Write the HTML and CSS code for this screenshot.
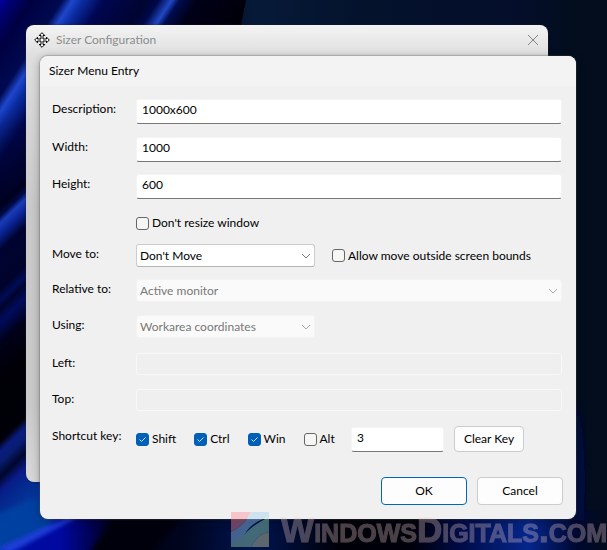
FILE: index.html
```html
<!DOCTYPE html>
<html lang="en">
<head>
<meta charset="utf-8">
<title>Sizer Menu Entry</title>
<link rel="stylesheet" href="styles.css">
</head>
<body>
<main class="desktop">
  <svg class="wallpaper" viewBox="0 0 607 550" preserveAspectRatio="none" aria-hidden="true">
    <defs>
      <linearGradient id="base" x1="0" y1="0" x2="1" y2="0">
        <stop offset="0" stop-color="#00000c"/><stop offset=".38" stop-color="#04122c"/>
        <stop offset=".42" stop-color="#061a38"/><stop offset=".6" stop-color="#04122c"/>
        <stop offset=".86" stop-color="#040e2a"/><stop offset=".94" stop-color="#020d1e"/><stop offset="1" stop-color="#020c1c"/>
      </linearGradient>
      <linearGradient id="upper" gradientUnits="userSpaceOnUse" x1="0" y1="0" x2="183" y2="119">
        <stop offset="0" stop-color="#0000a0"/><stop offset=".04" stop-color="#000074"/><stop offset=".12" stop-color="#000042"/>
        <stop offset=".24" stop-color="#000a50"/><stop offset=".28" stop-color="#1e46cc"/><stop offset=".32" stop-color="#0a2ca0"/>
        <stop offset=".4" stop-color="#000650"/><stop offset=".56" stop-color="#000430"/><stop offset=".61" stop-color="#000848"/>
        <stop offset=".66" stop-color="#2048c4"/><stop offset=".69" stop-color="#000c50"/><stop offset=".76" stop-color="#000018"/>
        <stop offset="1" stop-color="#000008"/>
      </linearGradient>
      <linearGradient id="lower" gradientUnits="userSpaceOnUse" x1="0" y1="200" x2="180" y2="387">
        <stop offset="0" stop-color="#00001c" stop-opacity="0"/><stop offset=".02" stop-color="#00001c"/>
        <stop offset=".045" stop-color="#000a48"/><stop offset=".065" stop-color="#1a3cb8"/>
        <stop offset=".1" stop-color="#08208c"/><stop offset=".14" stop-color="#000330"/><stop offset=".25" stop-color="#00042c"/>
        <stop offset=".28" stop-color="#000c58"/><stop offset=".3" stop-color="#00042c"/><stop offset=".34" stop-color="#000c5c"/>
        <stop offset=".4" stop-color="#00001a"/><stop offset=".5" stop-color="#000006"/><stop offset=".67" stop-color="#000008"/>
        <stop offset=".7" stop-color="#0a1c80"/><stop offset=".73" stop-color="#081c70"/><stop offset=".77" stop-color="#00062c"/>
        <stop offset=".81" stop-color="#0a1a88"/><stop offset=".84" stop-color="#04268c"/><stop offset="1" stop-color="#0646a8"/>
      </linearGradient>
      <linearGradient id="shade" x1="0" y1="0" x2="0" y2="1">
        <stop offset="0" stop-color="#00001c" stop-opacity="0"/><stop offset="1" stop-color="#00001c"/>
      </linearGradient>
      <linearGradient id="floor" x1="0" y1="0" x2="1" y2="0">
        <stop offset="0" stop-color="#0010a0"/><stop offset=".1" stop-color="#0008a0"/><stop offset=".17" stop-color="#000034"/>
        <stop offset=".2" stop-color="#000010"/><stop offset=".3" stop-color="#00051e"/><stop offset=".42" stop-color="#001450"/>
        <stop offset=".56" stop-color="#000008"/><stop offset=".68" stop-color="#00000c"/>
        <stop offset=".76" stop-color="#000c48"/><stop offset=".87" stop-color="#06268c"/><stop offset=".95" stop-color="#000830"/><stop offset="1" stop-color="#020a1c"/>
      </linearGradient>
      <filter id="soft" x="-20%" y="-20%" width="140%" height="140%"><feGaussianBlur stdDeviation="2"/></filter>
    </defs>
    <rect width="607" height="550" fill="url(#base)"/>
    <path d="M0 0H246L238 40H40V240H0Z" fill="url(#upper)"/>
    <path d="M0 110H40V240H0Z" fill="url(#shade)"/>
    <path d="M0 150H60V525H0Z" fill="url(#lower)"/>
    <path d="M40 510H607V550H0V525Z" fill="url(#floor)"/>
    <g filter="url(#soft)">
      <path d="M-5 515L30 500H80L45 528-5 555Z" fill="#0440a0"/>
      <path d="M-5 550L68 517H78L10 553Z" fill="#1a3cd8"/>
      <path d="M112 519H180L150 555H88Z" fill="#000010"/>
      <path d="M576 400Q588 440 584 520H574Z" fill="#000840"/>
    </g>
  </svg>

  <section class="window parent" aria-label="Sizer Configuration">
    <header class="parent-bar">
      <svg class="move-icon" viewBox="0 0 16 16" aria-hidden="true">
        <path d="M8 .7 10.8 3.5H9V7h3.5V5.2L15.3 8l-2.8 2.8V9H9v3.5h1.8L8 15.3l-2.8-2.8H7V9H3.5v1.8L.7 8l2.8-2.8V7H7V3.5H5.2Z"/>
      </svg>
      <h2 class="parent-title">Sizer Configuration</h2>
      <button class="close" type="button" aria-label="Close">
        <svg viewBox="0 0 12 12"><path d="M1 1 11 11M11 1 1 11"/></svg>
      </button>
    </header>
  </section>

  <form class="window dialog">
    <h1 class="dialog-title">Sizer Menu Entry</h1>
    <div class="fields">
      <label class="label" for="desc">Description:</label>
      <input class="text" id="desc" type="text" value="1000x600">
      <label class="label" for="width">Width:</label>
      <input class="text" id="width" type="text" value="1000">
      <label class="label" for="height">Height:</label>
      <input class="text" id="height" type="text" value="600">
      <label class="check second"><input type="checkbox">Don't resize window</label>
      <label class="label" for="move">Move to:</label>
      <div class="line">
        <span class="pick short"><select id="move"><option>Don't Move</option></select><svg viewBox="0 0 10 6" aria-hidden="true"><path d="M1 1 5 5 9 1"/></svg></span>
        <label class="check"><input type="checkbox">Allow move outside screen bounds</label>
      </div>
      <label class="label" for="relative">Relative to:</label>
      <span class="pick"><select id="relative" disabled><option>Active monitor</option></select><svg viewBox="0 0 10 6" aria-hidden="true"><path d="M1 1 5 5 9 1"/></svg></span>
      <label class="label" for="using">Using:</label>
      <span class="pick short"><select id="using" disabled><option>Workarea coordinates</option></select><svg viewBox="0 0 10 6" aria-hidden="true"><path d="M1 1 5 5 9 1"/></svg></span>
      <label class="label" for="left">Left:</label>
      <input class="text" id="left" type="text" disabled>
      <label class="label" for="top">Top:</label>
      <input class="text" id="top" type="text" disabled>
      <label class="label" for="key">Shortcut key:</label>
      <div class="line keys">
        <div class="modifiers">
          <label class="check"><input type="checkbox" checked>Shift</label>
          <label class="check"><input type="checkbox" checked>Ctrl</label>
          <label class="check"><input type="checkbox" checked>Win</label>
          <label class="check"><input type="checkbox">Alt</label>
        </div>
        <input class="text key" id="key" type="text" value="3">
        <button class="button clear" type="button">Clear Key</button>
      </div>
    </div>
    <div class="actions">
      <button class="button primary" type="submit">OK</button>
      <button class="button" type="button">Cancel</button>
    </div>
  </form>

  <div class="watermark">
    <svg class="mark" viewBox="0 0 38 35" aria-hidden="true">
      <path d="M0 0H20Q15 12 0 20Z" fill="#ff8c96"/>
      <path d="M20 0H38V5Q20 10 14 22T0 31V20Q15 12 20 0Z" fill="#a0d2f0"/>
      <path d="M38 5V20Q26 22 20 35H0V31Q8 30 14 22T38 5Z" fill="#a0e0b4"/>
      <path d="M38 20V35H20Q26 22 38 20Z" fill="#dcdca0"/>
    </svg>
    <span class="brand">WindowsDigitals.com</span>
  </div>
</main>
</body>
</html>
```
FILE: styles.css
```css
* { box-sizing: border-box; }

body {
  margin: 0;
  font: 12px/20px Lato, "Open Sans", sans-serif;
  color: #000;
}

input, select, button { font: inherit; color: inherit; }
h1, h2 { margin: 0; font-size: 12px; font-weight: 400; }

.desktop {
  position: relative;
  min-height: 100vh;
  overflow: hidden;
  background: #000a24;
}

.wallpaper {
  position: absolute;
  inset: 0;
  width: 100%;
  height: 100%;
}

.window { position: absolute; border-radius: 8px; }

.parent {
  inset: 25px 59px 68px 26px;
  background: linear-gradient(#f3f3f3, #dedede 32px, #cacaca 180px, #cacaca 380px, #d8d8d8);
  box-shadow: 0 0 2px #223;
}

.parent-bar {
  display: flex;
  align-items: center;
  gap: 6px;
  height: 30px;
  padding: 0 9px 0 8px;
}

.move-icon { width: 16px; height: 16px; fill: #fff; stroke: #000; }
.parent-title { flex: 1; color: #8c8c8c; }

.close { width: 12px; height: 12px; padding: 0; border: 0; background: none; }
.close svg { display: block; fill: none; stroke: #858585; }

.dialog {
  left: 40px;
  right: 31px;
  top: 56px;
  padding-bottom: 14px;
  background: #f0f0f0;
  box-shadow: 0 0 2px #555, 0 2px 10px rgba(0, 0, 0, .3);
}

.dialog-title {
  padding: 5px 9px;
  border-radius: 8px 8px 0 0;
  background: #f3f3f3;
}

.fields {
  display: grid;
  grid-template-columns: 84px 1fr;
  grid-template-rows: 38px 37px 39px 31px 35px 36px 38px 36px 37px;
  align-items: start;
  padding: 13px 14px 0 12px;
}

.second { grid-column: 2; }

.text {
  width: 100%;
  height: 25px;
  padding: 0 5px 4px;
  border: 1px solid #f4f4f4;
  border-bottom-color: #777;
  border-radius: 3px;
  background: #fff;
}

.text:disabled { height: 22px; border-color: #f8f8f8; background: #efefef; }

.line { display: flex; align-items: center; gap: 17px; }

.check { display: flex; align-items: center; gap: 3px; white-space: nowrap; }

.check input {
  appearance: none;
  width: 13px;
  height: 13px;
  margin: 0;
  border: 1px solid #666;
  border-radius: 3px;
  background: #f6f6f6;
}

.check input:checked {
  border-color: #005fb8;
  background: #005fb8 url("data:image/svg+xml,%3Csvg xmlns='http://www.w3.org/2000/svg' viewBox='0 0 11 11'%3E%3Cpath d='M2.5 5.5 4.5 7.5 8.5 3.5' fill='none' stroke='%23cfe4f8'/%3E%3C/svg%3E");
}

.pick { display: grid; align-items: center; }
.pick > * { grid-area: 1 / 1; }
.short { width: 179px; }

.pick select {
  appearance: none;
  width: 100%;
  height: 23px;
  padding: 0 3px;
  border: 1px solid #ccc;
  border-bottom-color: #b4b4b4;
  border-radius: 3px;
  background: #fff;
}

.pick select:disabled { border-color: #f3f3f3; background: #fafafa; color: #787878; opacity: 1; }

.pick svg {
  justify-self: end;
  width: 10px;
  height: 6px;
  margin-right: 4px;
  fill: none;
  stroke: #777;
  pointer-events: none;
}

.pick select:disabled + svg { stroke: #aaa; }

.keys { gap: 10px; }
.modifiers { display: flex; flex: 1; gap: 18px; }
.key { width: 93px; }

.button {
  width: 86px;
  height: 28px;
  padding: 0;
  border: 1px solid #ccc;
  border-radius: 4px;
  background: #fdfdfd;
}

.clear { width: 70px; height: 26px; margin-right: 38px; }
.primary { border-color: #0067c0; }

.actions {
  display: flex;
  justify-content: flex-end;
  gap: 10px;
  padding: 25px 13px 0;
}

.watermark {
  position: absolute;
  right: 0;
  bottom: 3px;
  display: flex;
  align-items: center;
  gap: 12px;
  pointer-events: none;
}

.mark { width: 38px; height: 35px; opacity: .42; }

.brand {
  font: 700 35px/35px "Liberation Sans", Arial, sans-serif;
  font-variant-caps: small-caps;
  color: #e6c8c8;
  -webkit-text-stroke: 1px #e6c8c8;
  opacity: .32;
}
```
